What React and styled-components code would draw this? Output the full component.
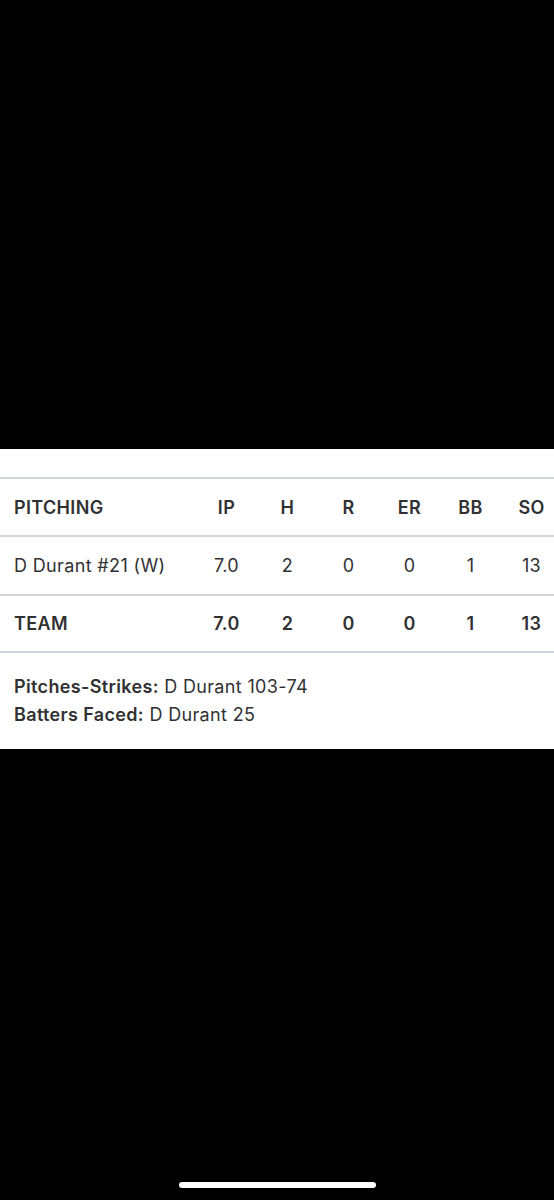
import React from "react";
import styled, { createGlobalStyle } from "styled-components";

const Global = createGlobalStyle`
  html, body { margin: 0; padding: 0; background: #000; }
  body { font-family: Inter, "Noto Sans", Roboto, sans-serif; }
`;

const Screen = styled.div`
  min-height: 1200px;
  display: flex;
  flex-direction: column;
  background: #000;
`;

const Panel = styled.section`
  margin-top: 449px;
  background: #fff;
  padding-top: 28px;
  color: #313133;
`;

const Row = styled.div`
  display: grid;
  grid-template-columns: 1fr repeat(5, 61px) 53px;
  align-items: center;
  height: ${(p) => p.$h}px;
  padding-left: 14px;
  border-top: 2px solid #cfd5db;
  font-size: 18px;
  letter-spacing: 0.35px;
  font-weight: ${(p) => (p.$bold ? 600 : 400)};
`;

const NameCell = styled.div`
  white-space: nowrap;
`;

const Cell = styled.div`
  text-align: center;
  padding-left: ${(p) => (p.$last ? 8 : 0)}px;
`;

const Footer = styled.div`
  border-top: 2px solid #cfd5db;
  padding: 20px 14px;
  font-size: 18px;
  letter-spacing: 0.35px;
  line-height: 28px;
`;

const Label = styled.span`
  font-weight: 600;
`;

const Spacer = styled.div`
  flex: 1;
`;

const HomeBar = styled.div`
  align-self: center;
  width: 197px;
  height: 6px;
  border-radius: 3px;
  background: #fff;
  margin: 0 0 12px 0;
`;

const cols = ["IP", "H", "R", "ER", "BB", "SO"];
const rows = [
  { name: "PITCHING", vals: cols, bold: true, h: 56 },
  { name: "D Durant #21 (W)", vals: ["7.0", "2", "0", "0", "1", "13"], bold: false, h: 57 },
  { name: "TEAM", vals: ["7.0", "2", "0", "0", "1", "13"], bold: true, h: 55 },
];

export default function App() {
  return (
    <>
      <Global />
      <Screen>
        <Panel>
          {rows.map((r) => (
            <Row key={r.name} $bold={r.bold} $h={r.h}>
              <NameCell>{r.name}</NameCell>
              {r.vals.map((v, i) => (
                <Cell key={i} $last={i === 5}>{v}</Cell>
              ))}
            </Row>
          ))}
          <Footer>
            <div><Label>Pitches-Strikes:</Label> D Durant 103-74</div>
            <div><Label>Batters Faced:</Label> D Durant 25</div>
          </Footer>
        </Panel>
        <Spacer />
        <HomeBar />
      </Screen>
    </>
  );
}
